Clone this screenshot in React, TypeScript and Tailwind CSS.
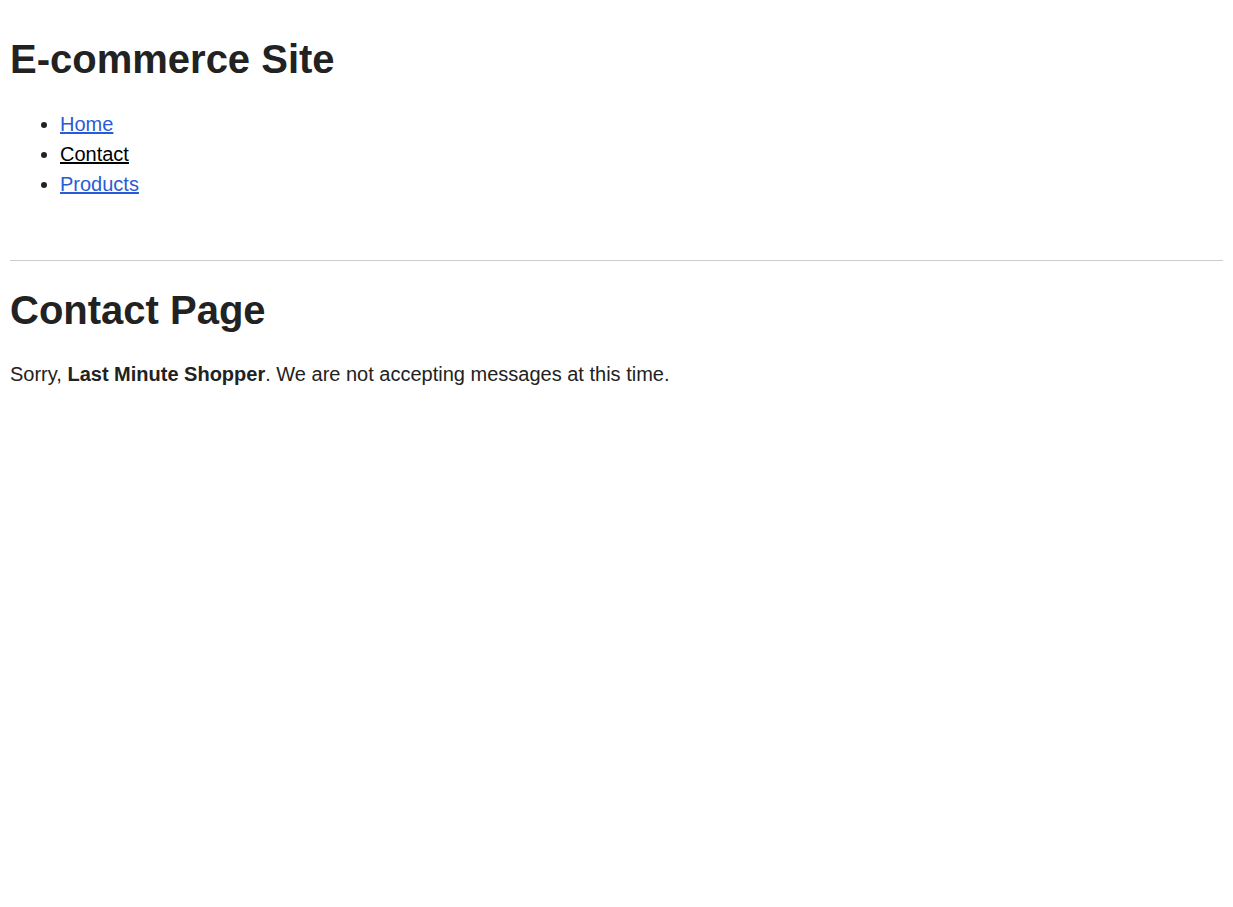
export default function App() {
  const links = [
    { label: 'Home', active: false },
    { label: 'Contact', active: true },
    { label: 'Products', active: false },
  ];

  return (
    <div className="min-h-screen bg-white px-[10px] pb-10 text-[#222] font-['Liberation_Sans',Arial,sans-serif]">
      <header>
        <h1 className="mt-[35px] text-[40px] leading-[48px] font-bold">E-commerce Site</h1>
        <nav>
          <ul className="mt-[26px] list-disc pl-[50px] text-[20px] leading-[30px]">
            {links.map((link) => (
              <li key={link.label}>
                <a href="#" className={`underline ${link.active ? 'text-black' : 'text-[#2a5bd7]'}`}>
                  {link.label}
                </a>
              </li>
            ))}
          </ul>
        </nav>
      </header>

      <hr className="mt-[61px] border-0 border-t border-[#ccc]" />

      <main>
        <h1 className="mt-[25px] text-[40px] leading-[48px] font-bold">Contact Page</h1>
        <p className="mt-[25px] text-[20px] leading-[30px]">
          Sorry, <strong className="font-bold">Last Minute Shopper</strong>. We are not accepting messages at this time.
        </p>
      </main>
    </div>
  );
}
